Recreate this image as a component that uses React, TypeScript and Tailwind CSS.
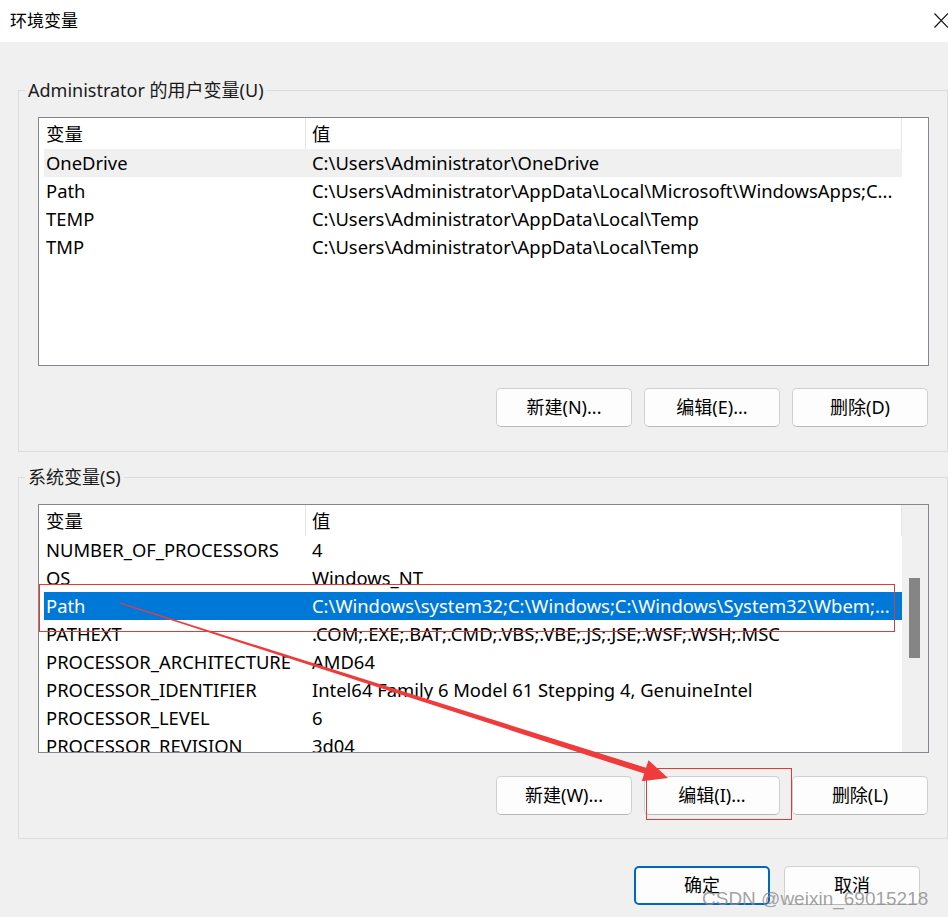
import React from "react";

type Row = { name: string; value: string };

const userRows: Row[] = [
    { name: "OneDrive", value: "C:\\Users\\Administrator\\OneDrive" },
    { name: "Path", value: "C:\\Users\\Administrator\\AppData\\Local\\Microsoft\\WindowsApps;C..." },
    { name: "TEMP", value: "C:\\Users\\Administrator\\AppData\\Local\\Temp" },
    { name: "TMP", value: "C:\\Users\\Administrator\\AppData\\Local\\Temp" },
];

const systemRows: Row[] = [
    { name: "NUMBER_OF_PROCESSORS", value: "4" },
    { name: "OS", value: "Windows_NT" },
    { name: "Path", value: "C:\\Windows\\system32;C:\\Windows;C:\\Windows\\System32\\Wbem;..." },
    { name: "PATHEXT", value: ".COM;.EXE;.BAT;.CMD;.VBS;.VBE;.JS;.JSE;.WSF;.WSH;.MSC" },
    { name: "PROCESSOR_ARCHITECTURE", value: "AMD64" },
    { name: "PROCESSOR_IDENTIFIER", value: "Intel64 Family 6 Model 61 Stepping 4, GenuineIntel" },
    { name: "PROCESSOR_LEVEL", value: "6" },
    { name: "PROCESSOR_REVISION", value: "3d04" },
];

function ListView({
    rows,
    hover,
    selected,
    scrollbar,
}: {
    rows: Row[];
    hover?: number;
    selected?: number;
    scrollbar?: boolean;
}) {
    return (
        <div className="flex h-[249px] overflow-hidden border border-[#828790] bg-white text-[18.4px]">
            <div className="flex w-[863px] flex-col overflow-hidden">
                {/* cabecera */}
                <div className="flex h-[31px] shrink-0 items-center border-r border-[#e5e5e5]">
                    <div className="flex h-full w-[267px] items-center border-r border-[#e5e5e5] pl-[7px]">变量</div>
                    <div className="pl-[6px]">值</div>
                </div>
                {rows.map((r, i) => {
                    const sel = i === selected;
                    const hov = i === hover;
                    return (
                        <div
                            key={r.name}
                            className={
                                "ml-[5px] flex h-[28px] shrink-0 items-center whitespace-nowrap " +
                                (sel ? "bg-[#0078d7] text-white" : hov ? "bg-[#f0f0f0]" : "")
                            }
                        >
                            <div className="w-[262px] shrink-0 overflow-hidden pl-[2px]">{r.name}</div>
                            <div className="pl-[6px]">{r.value}</div>
                        </div>
                    );
                })}
            </div>
            {scrollbar ? (
                <div className="flex w-[26px] bg-[#f0f0f0] pl-[7px] pt-[73px]">
                    <div className="h-[80px] w-[11px] bg-[#858585]" />
                </div>
            ) : (
                <div className="w-[26px] bg-white" />
            )}
        </div>
    );
}

function Btn({ children, primary }: { children: React.ReactNode; primary?: boolean }) {
    return (
        <div
            className={
                "flex h-[39px] w-[136px] items-center justify-center rounded-[5px] bg-[#fdfdfd] " +
                (primary ? "border-2 border-[#0067c0]" : "border border-[#d0d0d0] border-b-[#b9b9b9]")
            }
        >
            {children}
        </div>
    );
}

function Group({
    label,
    className,
    children,
}: {
    label: string;
    className?: string;
    children: React.ReactNode;
}) {
    return (
        <fieldset className={"ml-[18px] border border-[#dcdcdc] p-0 " + (className ?? "")}>
            <legend className="ml-[6px] px-[3px] leading-[24px] text-[#1a1a1a]">{label}</legend>
            <div className="pl-[19px] pr-[18px] pt-[15px]">{children}</div>
        </fieldset>
    );
}

export default function App() {
    return (
        <div className="relative h-[917px] w-[948px] overflow-hidden bg-[#f0f0f0] font-['Noto_Sans','Noto_Sans_CJK_SC',sans-serif] text-[18px] text-black">
            {/* barra de título */}
            <div className="flex h-[42px] items-center justify-between bg-white pl-[10px]">
                <span className="text-[17px]">环境变量</span>
                <svg width="14" height="15" viewBox="0 0 14 15" className="mb-[2px]">
                    <path d="M0.5 0.5 L14 14.5 M14 0.5 L0.5 14.5" stroke="#111" strokeWidth="1.1" fill="none" />
                </svg>
            </div>

            <div className="pt-[36px]">
                <Group label="Administrator 的用户变量(U)" className="pb-[24px]">
                    <ListView rows={userRows} hover={0} />
                    <div className="mr-[1px] mt-[22px] flex justify-end gap-[12px]">
                        <Btn>新建(N)...</Btn>
                        <Btn>编辑(E)...</Btn>
                        <Btn>删除(D)</Btn>
                    </div>
                </Group>

                <Group label="系统变量(S)" className="mt-[13px] pb-[23px]">
                    <ListView rows={systemRows} selected={2} scrollbar />
                    <div className="mr-[1px] mt-[23px] flex justify-end gap-[12px]">
                        <Btn>新建(W)...</Btn>
                        <Btn>编辑(I)...</Btn>
                        <Btn>删除(L)</Btn>
                    </div>
                </Group>

                <div className="mt-[27px] flex justify-end gap-[14px] pr-[28px]">
                    <Btn primary>确定</Btn>
                    <Btn>取消</Btn>
                </div>
            </div>

            {/* anotaciones rojas encima de la captura */}
            <div className="pointer-events-none absolute left-[39px] top-[584px] h-[48px] w-[856px] border border-[#e53935]" />
            <div className="pointer-events-none absolute left-[646px] top-[768px] h-[52px] w-[146px] border border-[#e53935]" />
            <svg className="pointer-events-none absolute left-0 top-0" width="948" height="917">
                <polygon
                    points="119.8,603.5 120.2,602.5 646.0,767.8 648.5,760.2 668,778 641.8,781.2 644.2,773.6"
                    fill="#ef3b3b"
                />
            </svg>

            <div className="pointer-events-none absolute left-[702px] top-[885px] font-['Liberation_Sans',sans-serif] text-[19px] text-[#8a8a8a]/80">
                CSDN @weixin_69015218
            </div>
        </div>
    );
}
